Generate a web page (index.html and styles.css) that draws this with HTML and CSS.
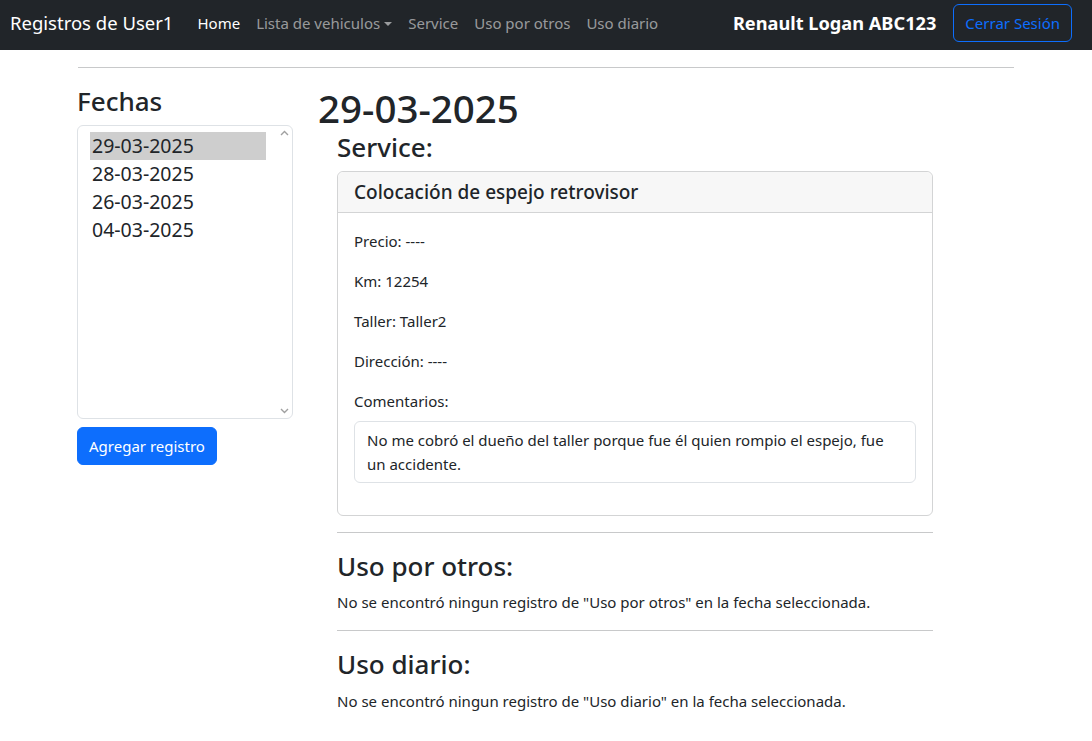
FILE: index.html
```html
<!DOCTYPE html>
<html lang="es">
<head>
<meta charset="utf-8">
<title>Registros de User1</title>
<link rel="stylesheet" href="styles.css">
</head>
<body>
<nav class="navbar">
  <div class="nav-left">
    <a class="brand">Registros de User1</a>
    <ul class="nav-links">
      <li class="active">Home</li>
      <li class="dropdown">Lista de vehiculos<span class="caret"></span></li>
      <li>Service</li>
      <li>Uso por otros</li>
      <li>Uso diario</li>
    </ul>
  </div>
  <div class="nav-right">
    <span class="vehicle">Renault Logan ABC123</span>
    <button class="btn-outline">Cerrar Sesión</button>
  </div>
</nav>

<main class="container">
  <hr class="top-rule">
  <div class="row">
    <aside class="col-side">
      <h3 class="h3">Fechas</h3>
      <div class="listbox">
        <div class="options">
          <div class="option selected">29-03-2025</div>
          <div class="option">28-03-2025</div>
          <div class="option">26-03-2025</div>
          <div class="option">04-03-2025</div>
        </div>
        <div class="scroll">
          <svg width="9" height="6" viewBox="0 0 9 6"><path d="M1 5 L4.5 1.5 L8 5" fill="none" stroke="#a0a0a0" stroke-width="1.4"/></svg>
          <svg width="9" height="6" viewBox="0 0 9 6"><path d="M1 1 L4.5 4.5 L8 1" fill="none" stroke="#a0a0a0" stroke-width="1.4"/></svg>
        </div>
      </div>
      <button class="btn-primary">Agregar registro</button>
    </aside>
    <section class="col-main">
      <h1 class="h1">29-03-2025</h1>
      <div class="records">
        <h3 class="h3">Service:</h3>
        <div class="card">
          <div class="card-header"><h5>Colocación de espejo retrovisor</h5></div>
          <div class="card-body">
            <p>Precio: ----</p>
            <p>Km: 12254</p>
            <p>Taller: Taller2</p>
            <p>Dirección: ----</p>
            <p class="label">Comentarios:</p>
            <div class="comment">No me cobró el dueño del taller porque fue él quien rompio el espejo, fue un accidente.</div>
          </div>
        </div>
        <hr class="rule">
        <h3 class="h3">Uso por otros:</h3>
        <p>No se encontró ningun registro de "Uso por otros" en la fecha seleccionada.</p>
        <hr class="rule">
        <h3 class="h3">Uso diario:</h3>
        <p>No se encontró ningun registro de "Uso diario" en la fecha seleccionada.</p>
      </div>
    </section>
  </div>
</main>
</body>
</html>
```

FILE: styles.css
```css
* { box-sizing: border-box; }
html, body { margin: 0; padding: 0; }
body {
  font-family: "Noto Sans", "Open Sans", sans-serif;
  font-size: 15px;
  line-height: 24px;
  color: #212529;
  background: #fff;
}
p { margin: 0 0 16px; }
h1, h3, h5 { margin: 0; font-weight: 500; line-height: 1.2; }

.navbar {
  height: 50px;
  background: #212529;
  display: flex;
  justify-content: space-between;
  align-items: center;
  padding: 0 20px 5px 10px;
}
.nav-left { display: flex; align-items: center; }
.brand { color: #fff; font-size: 18.5px; margin-right: 16px; line-height: 30px; }
.nav-links { list-style: none; margin: 0; padding: 0; display: flex; }
.nav-links li { color: rgba(255,255,255,.55); padding: 8px 8px; }
.nav-links li.active { color: #fff; }
.caret {
  display: inline-block;
  margin-left: 4px;
  vertical-align: 3px;
  border-top: 4.5px solid;
  border-left: 4px solid transparent;
  border-right: 4px solid transparent;
}
.nav-right { display: flex; align-items: center; }
.vehicle { color: #fff; font-weight: 700; font-size: 18.2px; margin-right: 17px; }
.btn-outline {
  font-family: inherit;
  font-size: 15px;
  line-height: 24px;
  padding: 6px 11px;
  color: #0d6efd;
  background: transparent;
  border: 1px solid #0d6efd;
  border-radius: 6px;
}

.container { width: 960px; margin: 0 auto; padding: 0 12px; }
.top-rule { margin: 17px 0 18px; border: 0; border-top: 1px solid #c8c9ca; }
.row { display: flex; }
.col-side { width: 216px; margin-left: -1px; margin-right: 25px; flex: none; }
.col-main { flex: 1; }

.h3 { font-size: 26px; margin-bottom: 8px; }
.h1 { font-size: 38.5px; line-height: 44px; margin-bottom: 2px; }

.listbox {
  height: 294px;
  border: 1px solid #dee2e6;
  border-radius: 6px;
  display: flex;
  padding: 6px 0 0 12px;
}
.options { flex: 1; }
.option { font-size: 19.5px; line-height: 28px; padding: 0 2px; margin-right: 10px; }
.option.selected { background: #cecece; }
.scroll {
  width: 16px;
  display: flex;
  flex-direction: column;
  justify-content: space-between;
  align-items: center;
  padding: 0 0 4px;
  margin-top: -2px;
}

.btn-primary {
  margin-top: 8px;
  font-family: inherit;
  font-size: 15px;
  line-height: 24px;
  padding: 6px 11px;
  color: #fff;
  background: #0d6efd;
  border: 1px solid #0d6efd;
  border-radius: 6px;
}

.records { margin-left: 19px; width: 596px; }
.card {
  border: 1px solid #d3d4d5;
  border-radius: 6px;
  margin-bottom: 16px;
}
.card-header {
  background: #f7f7f7;
  border-bottom: 1px solid #d3d4d5;
  padding: 8px 16px;
  border-radius: 6px 6px 0 0;
}
.card-header h5 { font-size: 19px; line-height: 24px; }
.card-body { padding: 16px; }
.label { margin-bottom: 8px; }
.comment {
  border: 1px solid #dee2e6;
  border-radius: 6px;
  padding: 6px 12px;
  margin-bottom: 16px;
}
.rule { margin: 0 0 18px; border: 0; border-top: 1px solid #c8c9ca; }
```
